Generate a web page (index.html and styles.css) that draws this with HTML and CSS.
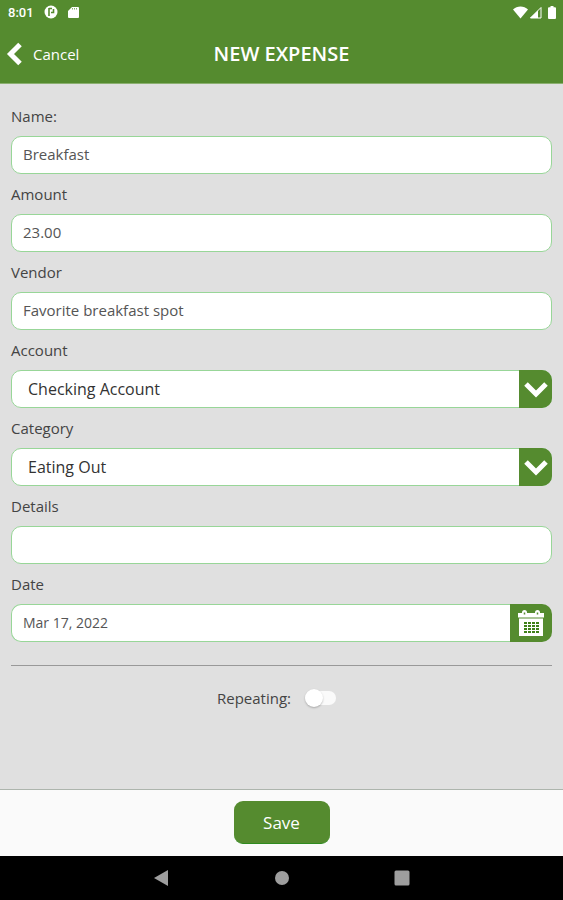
FILE: index.html
```html
<!DOCTYPE html>
<html lang="en">
<head>
    <meta charset="UTF-8">
    <meta name="viewport" content="width=device-width, initial-scale=1.0">
    <title>New Expense</title>
    <link rel="stylesheet" href="styles.css">
</head>
<body>
    <header class="header">
        <div class="status-bar">
            <span class="time">8:01</span>
            <svg width="14" height="14" viewBox="0 0 14 14">
                <circle cx="7" cy="7" r="6.5" fill="#fff"/>
                <path d="M5 3v8M5 3.5h3M9.5 4v3.5H7" fill="none" stroke="#558b2f" stroke-width="1.6"/>
            </svg>
            <svg width="11" height="13" viewBox="0 0 11 13">
                <path d="M4 1h6a1 1 0 0 1 1 1v9a1 1 0 0 1-1 1H1a1 1 0 0 1-1-1V5z" fill="#fff"/>
                <path d="M4.500 2v1.500M6.500 2v1.500M8.500 2v1.500" stroke="#558b2f" stroke-width="0.700"/>
            </svg>
            <div class="status-right">
                <svg width="15" height="13" viewBox="0 0 15 13">
                    <path d="M0 3.500C4-.5 11-.5 15 3.500L7.500 12.500z" fill="#fff"/>
                </svg>
                <svg width="13" height="13" viewBox="0 0 13 13">
                    <path d="M12 1.500V12H1.500z" fill="none" stroke="#fff" stroke-width="1"/>
                    <path d="M9 4.500V12H1z" fill="#fff"/>
                </svg>
                <svg class="battery" width="8" height="13" viewBox="0 0 8 13">
                    <path d="M2.500 0h3v1.300H7a1 1 0 0 1 1 1V12a1 1 0 0 1-1 1H1a1 1 0 0 1-1-1V2.300a1 1 0 0 1 1-1h1.500z" fill="#fff"/>
                </svg>
            </div>
        </div>
        <div class="title-bar">
            <a class="cancel" href="#">
                <svg width="16" height="24" viewBox="0 0 16 24">
                    <path d="M14 2.500L4.500 12L14 21.500" fill="none" stroke="#fff" stroke-width="5"/>
                </svg>
                Cancel
            </a>
            <h1>NEW EXPENSE</h1>
        </div>
    </header>

    <form class="expense-form" id="expenseForm">
        <label for="name">Name:</label>
        <input class="field" type="text" id="name" value="Breakfast">

        <label for="amount">Amount</label>
        <input class="field" type="text" id="amount" value="23.00">

        <label for="vendor">Vendor</label>
        <input class="field" type="text" id="vendor" value="Favorite breakfast spot">

        <label for="account">Account</label>
        <div class="select-box">
            <select class="field" id="account">
                <option>Checking Account</option>
            </select>
            <span class="arrow">
                <svg width="24" height="18" viewBox="0 0 24 18">
                    <path d="M2 4L12 14L22 4" fill="none" stroke="#fff" stroke-width="5"/>
                </svg>
            </span>
        </div>

        <label for="category">Category</label>
        <div class="select-box">
            <select class="field" id="category">
                <option>Eating Out</option>
            </select>
            <span class="arrow">
                <svg width="24" height="18" viewBox="0 0 24 18">
                    <path d="M2 4L12 14L22 4" fill="none" stroke="#fff" stroke-width="5"/>
                </svg>
            </span>
        </div>

        <label for="details">Details</label>
        <input class="field" type="text" id="details">

        <label for="date">Date</label>
        <div class="date-box">
            <input class="field" type="text" id="date" value="Mar 17, 2022">
            <button class="calendar" type="button" aria-label="Choose date">
                <svg width="26" height="26" viewBox="0 0 26 26">
                    <path d="M0 3h26v4.500H0zM1 8.500h24V26H1z" fill="#fff"/>
                    <path d="M4 2.500a2.500 2.500 0 0 1 5 0v2H4zM17 2.500a2.500 2.500 0 0 1 5 0v2h-5z" fill="#fff"/>
                    <path d="M6.500 2.500v2M19.500 2.500v2" stroke="#558b2f" stroke-width="1.500"/>
                    <path d="M6 13h15M6 16h15M6 19h15M6 22h15" stroke="#3f8018" stroke-width="2" stroke-dasharray="3 1"/>
                </svg>
            </button>
        </div>

        <hr>

        <div class="repeat-row">
            <label for="repeating">Repeating:</label>
            <input class="switch" type="checkbox" id="repeating">
        </div>
    </form>

    <footer class="footer">
        <button class="save" type="submit" form="expenseForm">Save</button>
    </footer>

    <nav class="nav-bar">
        <button type="button" aria-label="Back">
            <svg width="16" height="16" viewBox="0 0 16 16"><path d="M14 0v16L0 8z" fill="#9e9e9e"/></svg>
        </button>
        <button type="button" aria-label="Home">
            <svg width="16" height="16" viewBox="0 0 16 16"><circle cx="8" cy="8" r="7" fill="#9e9e9e"/></svg>
        </button>
        <button type="button" aria-label="Recent apps">
            <svg width="16" height="16" viewBox="0 0 16 16"><rect x="0.500" y="0.500" width="15" height="15" rx="1.500" fill="#9e9e9e"/></svg>
        </button>
    </nav>
</body>
</html>
```

FILE: styles.css
```css
* {
    box-sizing: border-box;
}
body {
    margin: 0;
    min-height: 100vh;
    display: flex;
    flex-direction: column;
    font-family: "Open Sans", "Noto Sans", sans-serif;
    font-size: 15px;
    color: #444;
    background-color: #e0e0e0;
}
svg {
    display: block;
}
button {
    font-family: inherit;
    border: none;
    padding: 0;
    cursor: pointer;
}

/* Header */
.header {
    background-color: #558b2f;
    color: #fff;
    border-bottom: 1px solid #8bb070;
}
.status-bar {
    display: flex;
    align-items: center;
    gap: 10px;
    height: 24px;
    padding: 0 7px 0 8px;
}
.time {
    font-family: Roboto, sans-serif;
    font-size: 13px;
    font-weight: 500;
}
.status-right {
    display: flex;
    gap: 1px;
    margin-left: auto;
}
.battery {
    margin-left: 5px;
}
.title-bar {
    display: grid;
    grid-template-columns: 1fr auto 1fr;
    align-items: center;
    height: 59px;
    padding: 0 6px;
}
.cancel {
    display: flex;
    align-items: center;
    gap: 11px;
    color: #fff;
    text-decoration: none;
}
h1 {
    margin: 0;
    font-size: 20px;
    font-weight: 600;
}

/* Form */
.expense-form {
    flex: 1;
    display: flex;
    flex-direction: column;
    padding: 12px 11px;
}
label {
    line-height: 40px;
}
.field {
    width: 100%;
    height: 38px;
    padding: 0 11px 2px;
    border: 1px solid #98d698;
    border-radius: 10px;
    background-color: #fff;
    color: #555;
    font-family: inherit;
    font-size: 15px;
}
.select-box {
    display: grid;
    grid-template-columns: 1fr 33px;
}
.select-box .field {
    grid-area: 1 / 1 / 2 / 3;
    appearance: none;
    padding: 0 16px;
    color: #333;
    font-size: 16px;
}
.arrow {
    grid-area: 1 / 2;
    z-index: 1;
    display: flex;
    align-items: center;
    justify-content: center;
    border-radius: 0 10px 10px 0;
    background-color: #558b2f;
    pointer-events: none;
}
.date-box {
    display: flex;
}
.date-box .field {
    flex: 1;
    min-width: 0;
    border-right: none;
    border-radius: 10px 0 0 10px;
    font-size: 14px;
}
.calendar {
    display: flex;
    align-items: center;
    justify-content: center;
    width: 42px;
    border-radius: 0 10px 10px 0;
    background-color: #558b2f;
}
hr {
    width: 100%;
    margin: 23px 0 12px;
    border: none;
    border-top: 1px solid #999;
}
.repeat-row {
    display: flex;
    align-items: center;
    justify-content: center;
    gap: 14px;
    padding-right: 10px;
}
.switch {
    appearance: none;
    display: flex;
    align-items: center;
    width: 31px;
    height: 14px;
    margin: 0;
    border-radius: 7px;
    background-color: #fafafa;
}
.switch::before {
    content: "";
    width: 18px;
    height: 18px;
    flex: none;
    border-radius: 50%;
    background-color: #fff;
    box-shadow: 0 1px 2px rgba(0, 0, 0, 0.25);
}
.switch:checked::before {
    margin-left: auto;
}

/* Footer */
.footer {
    display: flex;
    justify-content: center;
    padding: 11px 0 12px;
    border-top: 1px solid #adb5ad;
    background-color: #fafafa;
}
.save {
    width: 96px;
    height: 43px;
    border-radius: 9px;
    background-color: #558b2f;
    border-bottom: 1px solid #2e8b1f;
    color: #fff;
    font-size: 17px;
}
.nav-bar {
    display: flex;
    justify-content: center;
    gap: 104px;
    height: 44px;
    background-color: #000;
}
.nav-bar button {
    background: none;
}
```
